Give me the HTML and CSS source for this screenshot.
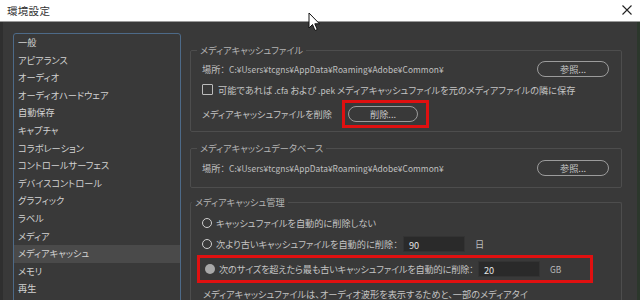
FILE: index.html
```html
<html>

<head>
    <title>環境設定</title>
    <link rel="stylesheet" href="styles.css">
</head>

<body>
    <div class="titlebar">
        <span class="title">環境設定</span>
        <svg class="close" width="10" height="10" viewBox="0 0 10 10">
            <path d="M0.5 0.5 L9.5 9.5 M9.5 0.5 L0.5 9.5" stroke="#222" stroke-width="1.1" fill="none" />
        </svg>
    </div>

    <!-- mouse pointer over the title bar -->
    <svg class="cursor" width="13" height="20" viewBox="0 0 13 20">
        <path d="M1 1 L1 16 L4.5 12.5 L7 18.5 L9.3 17.5 L6.8 11.8 L11.5 11.8 Z" fill="#fff" stroke="#111" stroke-width="1" stroke-linejoin="round" />
    </svg>

    <div class="window">
        <ul class="sidebar">
            <li>一般</li>
            <li>アピアランス</li>
            <li>オーディオ</li>
            <li>オーディオハードウェア</li>
            <li>自動保存</li>
            <li>キャプチャ</li>
            <li>コラボレーション</li>
            <li>コントロールサーフェス</li>
            <li>デバイスコントロール</li>
            <li>グラフィック</li>
            <li>ラベル</li>
            <li>メディア</li>
            <li class="selected">メディアキャッシュ</li>
            <li>メモリ</li>
            <li>再生</li>
        </ul>

        <div class="panel">
            <fieldset class="group files">
                <legend>メディアキャッシュファイル</legend>
                <div class="row">
                    <span class="path">場所： <span class="latin">C:¥Users¥tcgns¥AppData¥Roaming¥Adobe¥Common¥</span></span>
                    <button class="pill">参照...</button>
                </div>
                <div class="row check">
                    <span class="checkbox"></span>
                    <span>可能であれば <span class="latin">.cfa</span> および <span class="latin">.pek</span> メディアキャッシュファイルを元のメディアファイルの隣に保存</span>
                </div>
                <div class="row delete">
                    <span class="del-label">メディアキャッシュファイルを削除</span>
                    <span class="mark mark-btn"><button class="pill small">削除...</button></span>
                </div>
            </fieldset>

            <fieldset class="group db">
                <legend>メディアキャッシュデータベース</legend>
                <div class="row">
                    <span class="path">場所： <span class="latin">C:¥Users¥tcgns¥AppData¥Roaming¥Adobe¥Common¥</span></span>
                    <button class="pill">参照...</button>
                </div>
            </fieldset>

            <fieldset class="group manage">
                <legend>メディアキャッシュ管理</legend>
                <div class="row radio-row r1">
                    <span class="radio"></span>
                    <span>キャッシュファイルを自動的に削除しない</span>
                </div>
                <div class="row radio-row r2">
                    <span class="radio"></span>
                    <span class="opt-days">次より古いキャッシュファイルを自動的に削除：</span>
                    <span class="field">90</span>
                    <span class="unit">日</span>
                </div>
                <div class="row radio-row r3 mark">
                    <span class="radio on"></span>
                    <span class="opt-size">次のサイズを超えたら最も古いキャッシュファイルを自動的に削除：</span>
                    <span class="field">20</span>
                    <span class="unit latin">GB</span>
                </div>
                <div class="row note">メディアキャッシュファイルは、オーディオ波形を表示するためと、一部のメディアタイ</div>
            </fieldset>
        </div>
    </div>
</body>

</html>
```

FILE: styles.css
```css
* {
    margin: 0;
    padding: 0;
    box-sizing: border-box;
}

:root {
    --bg: #393939;
    --line: #4d4d4d;
    --text: #c4c4c4;
    --mark: #e01010;
}

body {
    width: 640px;
    height: 300px;
    overflow: hidden;
    background-color: var(--bg);
    font-family: "Noto Sans CJK JP", "Noto Sans", sans-serif;
    font-size: 9.2px;
    font-feature-settings: "palt";
    color: var(--text);
    white-space: nowrap;
}

.latin {
    font-size: 8.4px;
    letter-spacing: 0.05px;
}

.path .latin {
    margin-left: 2px;
}

/* title bar */
.titlebar {
    height: 22px;
    background-color: #fff;
    border-bottom: 1px solid #9a9a9a;
    display: flex;
    align-items: center;
    justify-content: space-between;
    padding: 0 8px 1px 7px;
}

.title {
    font-size: 10.5px;
    color: #333;
    letter-spacing: 0.3px;
}

.cursor {
    position: absolute;
    left: 308px;
    top: 12px;
}

/* body */
.window {
    display: flex;
    height: 278px;
    padding: 11px 0 0 10px;
    border-left: 3px solid #2f2f2f;
    border-right: 3px solid #2c372c;
}

.sidebar {
    list-style: none;
    width: 168px;
    height: 280px;
    border: 1px solid #4d6a88;
    border-radius: 3px;
    overflow: hidden;
}

.sidebar li {
    height: 17.6px;
    line-height: 17.6px;
    padding-left: 4px;
    color: #d2d2d2;
}

.sidebar li.selected {
    background-color: #4a4a4a;
}

.panel {
    width: 432px;
    margin-left: 9px;
    padding-top: 10px;
}

/* groups */
.group {
    border: 1px solid var(--line);
    border-radius: 2px;
    padding: 2px 12px 3px 11px;
}

.group legend {
    line-height: 14px;
    margin-left: -5px;
    padding: 0 3px;
    color: #b4b4b4;
}

.row {
    display: flex;
    align-items: center;
    height: 20px;
}

.path {
    flex: 1;
    color: #c0c0c0;
}

.pill {
    width: 72px;
    height: 16px;
    border: 1px solid #9c9c9c;
    border-radius: 8px;
    background: transparent;
    color: #c8c8c8;
    font-family: inherit;
    font-size: 9.2px;
    font-feature-settings: "palt";
    line-height: 14px;
}

.pill.small {
    width: 70px;
}

.check {
    height: 21px;
}

.checkbox {
    width: 11px;
    height: 11px;
    border: 1.5px solid #bcbcbc;
    border-radius: 1px;
    margin-right: 5px;
}

.delete {
    height: 28px;
}

.del-label {
    width: 140px;
}

/* red highlight marks */
.mark {
    border: 3px solid var(--mark);
}

.mark-btn {
    display: flex;
    height: 28px;
    padding: 0 8px 0 3px;
    align-items: center;
}

.db {
    margin-top: 9px;
    padding-top: 3px;
    padding-bottom: 9px;
}

.manage {
    margin-top: 7px;
    padding: 4px 0 0 6px;
    border-bottom: none;
    height: 120px;
}

.radio-row {
    padding-left: 5px;
}

.r2 {
    height: 22px;
}

.r3 {
    height: 28px;
    width: 396px;
}

.radio {
    width: 10px;
    height: 10px;
    border: 1.5px solid #cfcfcf;
    border-radius: 50%;
    margin-right: 4px;
}

.radio.on {
    border: none;
    background-color: #a8a8a8;
}

.opt-days {
    width: 187px;
}

.opt-size {
    width: 259px;
    letter-spacing: -0.2px;
}

.field {
    height: 16px;
    line-height: 16px;
    background-color: #2a2a2a;
    border: 1px solid #333;
    padding-left: 5px;
    color: #e6e6e6;
    width: 62px;
}

.unit {
    margin-left: 10px;
    color: #bdbdbd;
}

.note {
    padding-left: 6px;
    height: 22px;
}
```
